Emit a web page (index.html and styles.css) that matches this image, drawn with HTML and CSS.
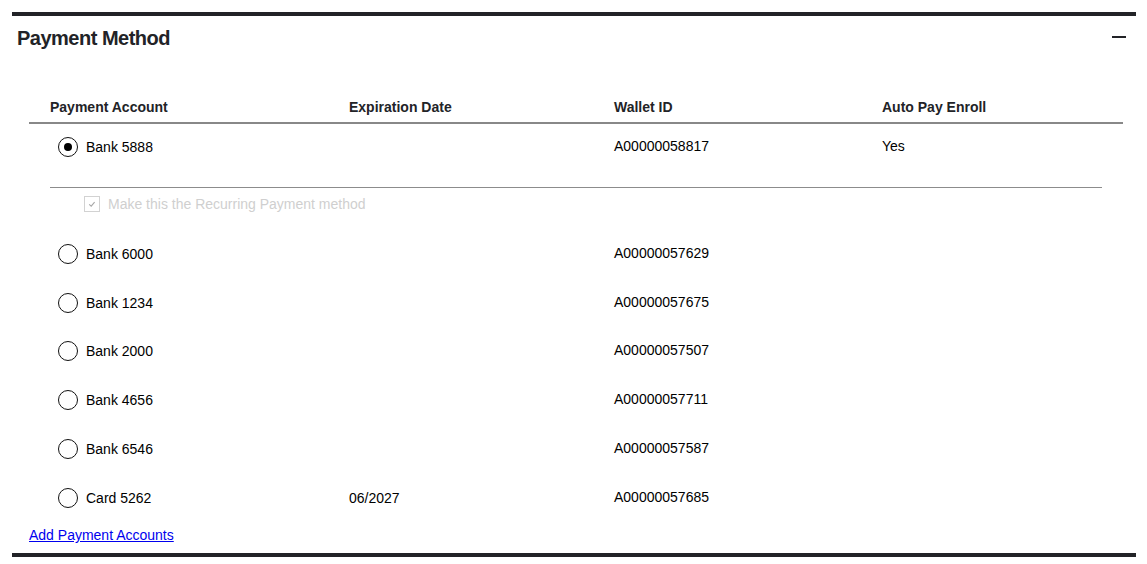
FILE: index.html
```html
<!DOCTYPE html>
<html lang="en">
<head>
<meta charset="utf-8">
<title>Payment Method</title>
<link rel="stylesheet" href="styles.css">
</head>
<body>
<section class="panel">
  <div class="panel-head">
    <h2 class="panel-title">Payment Method</h2>
    <span class="collapse-icon" aria-label="Collapse"></span>
  </div>
  <div class="accounts">
    <div class="acc-row acc-header">
      <div class="cell-account">Payment Account</div>
      <div>Expiration Date</div>
      <div>Wallet ID</div>
      <div>Auto Pay Enroll</div>
    </div>
    <div class="acc-row acc-item acc-first">
      <div class="cell-account"><span class="radio radio-on"></span><span>Bank 5888</span></div>
      <div></div>
      <div class="cell-wallet">A00000058817</div>
      <div class="cell-wallet">Yes</div>
    </div>
    <div class="recurring">
      <span class="checkbox"><svg width="14" height="14" viewBox="0 0 14 14"><polyline points="4.2,7.4 6.2,9.2 9.6,5.2" fill="none" stroke="#a8a8a8" stroke-width="1.1"/></svg></span>
      <span class="recurring-label">Make this the Recurring Payment method</span>
    </div>
    <div class="acc-row acc-item">
      <div class="cell-account"><span class="radio"></span><span>Bank 6000</span></div>
      <div></div>
      <div class="cell-wallet">A00000057629</div>
      <div></div>
    </div>
    <div class="acc-row acc-item">
      <div class="cell-account"><span class="radio"></span><span>Bank 1234</span></div>
      <div></div>
      <div class="cell-wallet">A00000057675</div>
      <div></div>
    </div>
    <div class="acc-row acc-item">
      <div class="cell-account"><span class="radio"></span><span>Bank 2000</span></div>
      <div></div>
      <div class="cell-wallet">A00000057507</div>
      <div></div>
    </div>
    <div class="acc-row acc-item">
      <div class="cell-account"><span class="radio"></span><span>Bank 4656</span></div>
      <div></div>
      <div class="cell-wallet">A00000057711</div>
      <div></div>
    </div>
    <div class="acc-row acc-item">
      <div class="cell-account"><span class="radio"></span><span>Bank 6546</span></div>
      <div></div>
      <div class="cell-wallet">A00000057587</div>
      <div></div>
    </div>
    <div class="acc-row acc-item">
      <div class="cell-account"><span class="radio"></span><span>Card 5262</span></div>
      <div>06/2027</div>
      <div class="cell-wallet">A00000057685</div>
      <div></div>
    </div>
  </div>
  <div class="panel-foot">
    <a class="add-link" href="#">Add Payment Accounts</a>
  </div>
</section>
</body>
</html>
```

FILE: styles.css
```css
body {
  margin: 0;
  background: #fff;
  color: #000;
  font-family: "Liberation Sans", Arial, sans-serif;
}

.panel {
  margin: 12px 11px 0 12px;
  border-top: 4px solid #222327;
  border-bottom: 4px solid #222327;
}

.panel-head {
  display: flex;
  justify-content: space-between;
  align-items: center;
  padding: 10px 10px 0 5px;
}

.panel-title {
  margin: 0;
  font-size: 20px;
  line-height: 24px;
  font-weight: 700;
  letter-spacing: -0.5px;
  color: #222327;
}

.collapse-icon {
  width: 14px;
  height: 2px;
  background: #222327;
  margin-bottom: 2px;
}

.accounts {
  margin: 49px 13px 0 17px;
}

.acc-row {
  display: grid;
  grid-template-columns: 299px 265px 268px 1fr;
  padding: 0 21px;
  font-size: 14px;
  line-height: 16px;
}

.acc-header {
  font-weight: 700;
  color: #222327;
  padding-bottom: 7px;
  border-bottom: 2px solid #888;
}

.acc-item {
  height: 48.75px;
  align-items: center;
}

.acc-first {
  height: 46px;
}

.cell-account {
  display: flex;
  align-items: center;
  gap: 8px;
}

.acc-item .cell-account {
  padding-left: 8px;
}

.cell-wallet {
  position: relative;
  top: -1px;
}

.radio {
  width: 20px;
  height: 20px;
  box-sizing: border-box;
  border: 1.5px solid #111;
  border-radius: 50%;
  display: flex;
  align-items: center;
  justify-content: center;
  flex: none;
}

.radio-on::after {
  content: "";
  width: 8px;
  height: 8px;
  border-radius: 50%;
  background: #000;
}

.recurring {
  margin: 17px 21px 0;
  border-top: 1px solid #8c8c8c;
  height: 33.6px;
  padding: 8px 0 0 34px;
  display: flex;
  align-items: flex-start;
  gap: 8px;
}

.checkbox {
  width: 16px;
  height: 16px;
  box-sizing: border-box;
  border: 1px solid #d2d2d2;
  display: flex;
  align-items: center;
  justify-content: center;
  flex: none;
}

.recurring-label {
  font-size: 14px;
  line-height: 16px;
  color: #cfcfcf;
}

.panel-foot {
  padding: 5px 0 10px 17px;
  font-size: 14px;
  line-height: 16px;
}

.add-link {
  color: #0000ee;
  text-decoration: underline;
}
```
